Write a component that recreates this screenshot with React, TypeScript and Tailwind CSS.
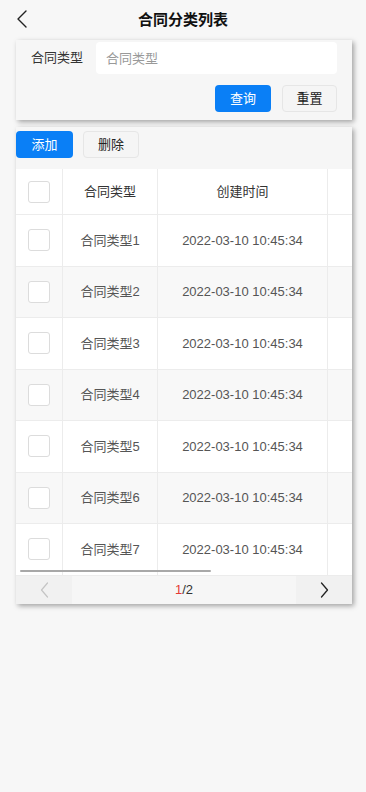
import React from 'react';

const rows = [1, 2, 3, 4, 5, 6, 7].map((n) => ({
  id: n,
  name: `合同类型${n}`,
  createdAt: '2022-03-10 10:45:34',
}));

const Checkbox = () => (
  <div className="w-[22px] h-[22px] rounded-[3px] border border-[#dcdcdc] bg-white" />
);

const App: React.FC = () => {
  return (
    <div
      className="w-[366px] h-[792px] bg-[#f7f7f7] overflow-hidden text-[#333]"
      style={{ fontFamily: '"Liberation Sans", "Noto Sans CJK SC", sans-serif' }}
    >
      {/* Header */}
      <div className="relative h-10 flex items-center justify-center">
        <button className="absolute left-[12px] top-[9px] w-5 h-5 flex items-center justify-center">
          <svg width="12" height="18" viewBox="0 0 12 18" fill="none">
            <path d="M10 1 L2 9 L10 17" stroke="#222" strokeWidth="1.4" strokeLinecap="round" strokeLinejoin="round" />
          </svg>
        </button>
        <h1 className="text-[15px] font-bold text-[#111]">合同分类列表</h1>
      </div>

      {/* Search card */}
      <div className="ml-4 mr-[14px] bg-[#f6f6f6] shadow-[2px_2px_5px_rgba(0,0,0,0.35)] pt-[2px] pb-2 pr-[15px]">
        <div className="flex items-center">
          <label className="w-[80px] pl-[15px] text-[13px] text-[#333]">合同类型</label>
          <input
            className="flex-1 h-[32px] rounded-[4px] bg-white px-[10px] text-[13px] outline-none placeholder:text-[#999]"
            placeholder="合同类型"
          />
        </div>
        <div className="flex justify-end gap-[11px] mt-[11px]">
          <button className="w-[56px] h-[27px] rounded-[4px] bg-[#0a7ff6] text-white text-[13px]">查询</button>
          <button className="w-[55px] h-[27px] rounded-[4px] bg-[#f5f5f5] border border-[#e6e6e6] text-[#222] text-[13px]">重置</button>
        </div>
      </div>

      {/* List card */}
      <div className="ml-4 mr-[14px] mt-[7px] bg-[#f6f6f6] shadow-[2px_2px_5px_rgba(0,0,0,0.35)] pt-1">
        <div className="flex gap-[10px] pb-[11px]">
          <button className="w-[57px] h-[27px] rounded-[4px] bg-[#0a7ff6] text-white text-[13px]">添加</button>
          <button className="w-[56px] h-[27px] rounded-[4px] bg-[#f5f5f5] border border-[#e6e6e6] text-[#222] text-[13px]">删除</button>
        </div>

        <div className="relative h-[407px] overflow-hidden">
          <div className="w-[590px]">
            <div className="flex h-[46px] bg-white border-b border-[#ececec] text-[13px] text-[#333]">
              <div className="w-[47px] flex items-center justify-center border-r border-[#ececec]">
                <Checkbox />
              </div>
              <div className="w-[95px] flex items-center justify-center border-r border-[#ececec]">合同类型</div>
              <div className="w-[170px] flex items-center justify-center border-r border-[#ececec]">创建时间</div>
              <div className="flex-1" />
            </div>
            {rows.map((r, i) => (
              <div
                key={r.id}
                className={`flex h-[51.5px] border-b border-[#ececec] text-[13px] text-[#555] ${i % 2 === 1 ? 'bg-[#f8f8f8]' : 'bg-white'}`}
              >
                <div className="w-[47px] flex items-center justify-center border-r border-[#ececec]">
                  <Checkbox />
                </div>
                <div className="w-[95px] flex items-center justify-center border-r border-[#ececec]">{r.name}</div>
                <div className="w-[170px] flex items-center justify-center border-r border-[#ececec]">{r.createdAt}</div>
                <div className="flex-1" />
              </div>
            ))}
          </div>
          {/* scrollbar */}
          <div className="absolute left-[4px] bottom-[4px] w-[191px] h-[2px] rounded-full bg-[#a8a8a8]" />
        </div>

        {/* Pagination */}
        <div className="flex h-[28px] text-[13px]">
          <div className="w-[56px] flex items-center justify-center bg-[#f1f1f1]">
            <svg width="9" height="16" viewBox="0 0 9 16" fill="none">
              <path d="M7.5 1 L1.5 8 L7.5 15" stroke="#c4c4c4" strokeWidth="1.2" strokeLinecap="round" strokeLinejoin="round" />
            </svg>
          </div>
          <div className="flex-1 flex items-center justify-center bg-[#f6f6f6] text-[#333]">
            <span className="text-[#e53935]">1</span>/2
          </div>
          <div className="w-[56px] flex items-center justify-center bg-[#f1f1f1]">
            <svg width="9" height="16" viewBox="0 0 9 16" fill="none">
              <path d="M1.5 1 L7.5 8 L1.5 15" stroke="#222" strokeWidth="1.3" strokeLinecap="round" strokeLinejoin="round" />
            </svg>
          </div>
        </div>
      </div>
    </div>
  );
};

export default App;
